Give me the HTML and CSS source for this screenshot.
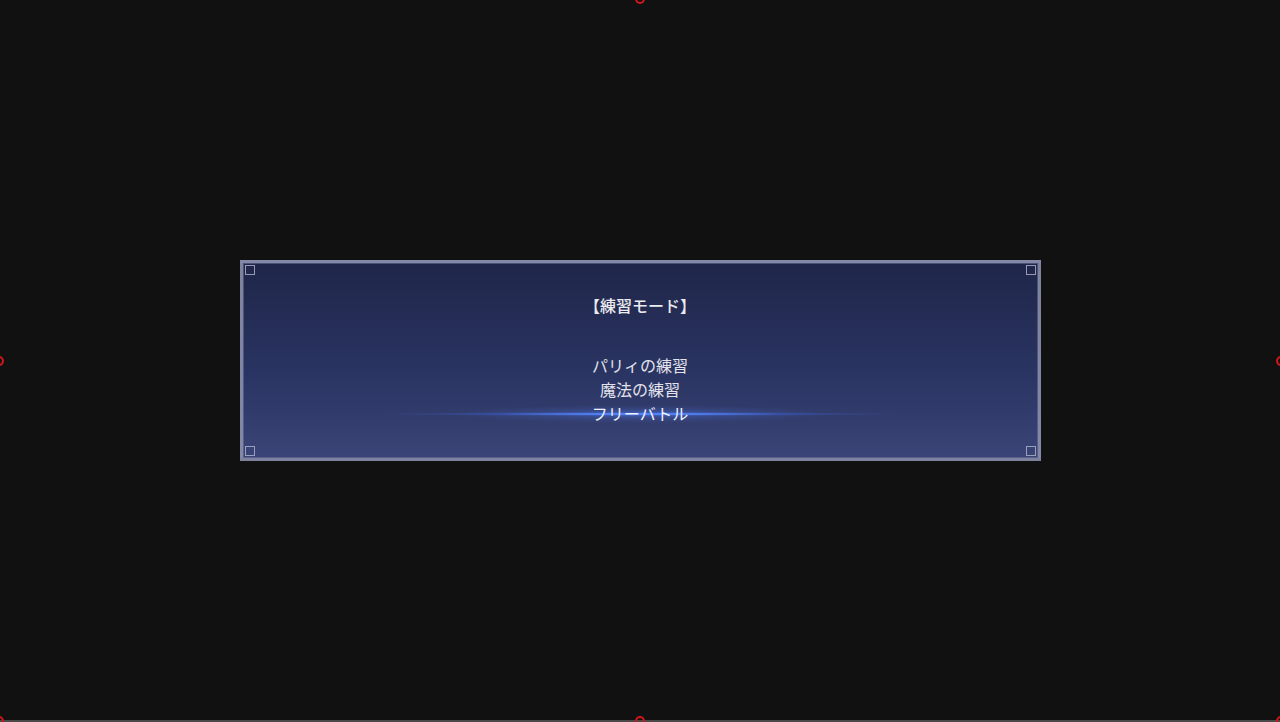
FILE: index.html
```html
<!DOCTYPE html>
<html lang="ja">
<head>
<meta charset="utf-8">
<link rel="stylesheet" href="styles.css">
</head>
<body>
<div class="stage">
  <div class="window">
    <span class="corner tl"></span>
    <span class="corner tr"></span>
    <span class="corner bl"></span>
    <span class="corner br"></span>
    <div class="title">【練習モード】</div>
    <ul class="menu">
      <li class="item">パリィの練習</li>
      <li class="item">魔法の練習</li>
      <li class="item selected">フリーバトル</li>
    </ul>
  </div>
  <span class="marker m-top"></span>
  <span class="marker m-left"></span>
  <span class="marker m-right"></span>
  <span class="marker m-bottom"></span>
  <span class="marker m-bl"></span>
  <span class="marker m-br"></span>
</div>
<div class="footer-bar"></div>
</body>
</html>
```

FILE: styles.css
```css
html, body {
  margin: 0;
  padding: 0;
  background: #111111;
  height: 722px;
  overflow: hidden;
  font-family: "Noto Sans CJK JP", "Noto Sans", sans-serif;
}

.stage {
  position: relative;
  height: 720px;
  display: flex;
  align-items: center;
  justify-content: center;
}

.footer-bar {
  height: 2px;
  background: #4a4a4a;
}

.window {
  position: relative;
  box-sizing: border-box;
  width: 801px;
  height: 201px;
  border: 3px solid rgba(150, 154, 180, 0.8);
  box-shadow: inset 0 0 0 1px rgba(120, 126, 160, 0.5);
  background: linear-gradient(to bottom, #1f2649 0%, #2a3462 55%, #3a4476 100%);
  padding-top: 30px;
  display: flex;
  flex-direction: column;
  align-items: center;
}

.corner {
  position: absolute;
  width: 8px;
  height: 8px;
  border: 1px solid rgba(170, 176, 200, 0.85);
}
.corner.tl { top: 2px; left: 2px; }
.corner.tr { top: 2px; right: 2px; }
.corner.bl { bottom: 2px; left: 2px; }
.corner.br { bottom: 2px; right: 2px; }

.title {
  color: #ebebf0;
  font-size: 16px;
  line-height: 24px;
  font-weight: 500;
}

.menu {
  position: relative;
  z-index: 0;
  list-style: none;
  margin: 36px 0 0;
  padding: 0;
  display: flex;
  flex-direction: column;
  align-items: center;
  width: 100%;
}

.item {
  position: relative;
  color: #e2e2ea;
  font-size: 16px;
  line-height: 24px;
}

.item.selected {
  color: #eef0ff;
}
.item.selected::before {
  content: "";
  position: absolute;
  left: 50%;
  top: 11px;
  width: 520px;
  height: 4px;
  margin-left: -260px;
  background: radial-gradient(closest-side, rgba(210, 225, 255, 1) 0%, rgba(90, 140, 255, 0.9) 25%, rgba(60, 100, 235, 0.35) 60%, rgba(60, 100, 230, 0) 100%);
  z-index: -1;
}
.item.selected::after {
  content: "";
  position: absolute;
  left: 50%;
  top: 4px;
  width: 380px;
  height: 18px;
  margin-left: -190px;
  background: radial-gradient(closest-side, rgba(80, 130, 255, 0.5) 0%, rgba(80, 130, 255, 0.15) 50%, rgba(80, 130, 255, 0) 100%);
  z-index: -1;
}

.marker {
  position: absolute;
  width: 6px;
  height: 6px;
  border: 2px solid #d01818;
  border-radius: 50%;
}
.m-top { top: -6px; left: 635px; }
.m-left { top: 356px; left: -6px; }
.m-right { top: 356px; right: -6px; }
.m-bottom { bottom: -6px; left: 635px; }
.m-bl { bottom: -6px; left: -6px; }
.m-br { bottom: -6px; right: -6px; }
```
